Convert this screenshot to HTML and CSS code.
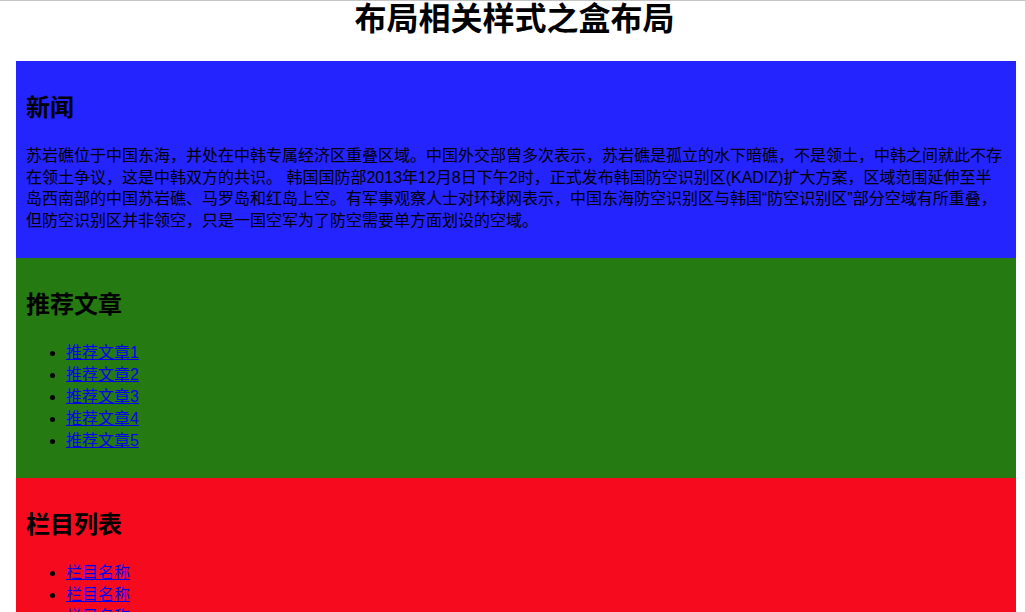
FILE: index.html
```html
<!DOCTYPE html>
<html lang="zh-CN">
<head>
<meta charset="utf-8">
<title>布局相关样式之盒布局</title>
<link rel="stylesheet" href="styles.css">
</head>
<body>
<h1 class="page-title">布局相关样式之盒布局</h1>
<div class="wrapper">
  <section class="box box-news">
    <h2 class="box-title">新闻</h2>
    <p class="box-text">苏岩礁位于中国东海，并处在中韩专属经济区重叠区域。中国外交部曾多次表示，苏岩礁是孤立的水下暗礁，不是领土，中韩之间就此不存在领土争议，这是中韩双方的共识。 韩国国防部2013年12月8日下午2时，正式发布韩国防空识别区(KADIZ)扩大方案，区域范围延伸至半岛西南部的中国苏岩礁、马罗岛和红岛上空。有军事观察人士对环球网表示，中国东海防空识别区与韩国“防空识别区”部分空域有所重叠，但防空识别区并非领空，只是一国空军为了防空需要单方面划设的空域。</p>
  </section>
  <section class="box box-recommend">
    <h2 class="box-title">推荐文章</h2>
    <ul class="box-list">
      <li><a href="#">推荐文章1</a></li>
      <li><a href="#">推荐文章2</a></li>
      <li><a href="#">推荐文章3</a></li>
      <li><a href="#">推荐文章4</a></li>
      <li><a href="#">推荐文章5</a></li>
    </ul>
  </section>
  <section class="box box-columns">
    <h2 class="box-title">栏目列表</h2>
    <ul class="box-list">
      <li><a href="#">栏目名称</a></li>
      <li><a href="#">栏目名称</a></li>
      <li><a href="#">栏目名称</a></li>
      <li><a href="#">栏目名称</a></li>
      <li><a href="#">栏目名称</a></li>
    </ul>
  </section>
</div>
</body>
</html>
```

FILE: styles.css
```css
html, body {
  margin: 0;
  padding: 0;
}
body {
  border-top: 1px solid #c4c4c4;
  font-family: "Liberation Sans", "Noto Sans CJK SC", sans-serif;
  font-size: 16px;
  color: #000;
  background: #fff;
}
.page-title {
  margin: 0 8px 24px;
  padding-left: 4px;
  font-size: 32px;
  line-height: 36px;
  font-weight: bold;
  text-align: center;
}
.wrapper {
  width: 1000px;
  margin-left: 16px;
}
.box {
  padding: 10px;
}
.box-news {
  background: #2424fe;
}
.box-recommend {
  background: #267a12;
}
.box-columns {
  background: #f50a1e;
}
.box-title {
  margin: 20px 0;
  font-size: 24px;
  line-height: 34px;
  font-weight: bold;
}
.box-text {
  margin: 16px 0;
  line-height: 21.7px;
}
.box-list {
  margin: 16px 0;
  padding-left: 40px;
}
.box-list li {
  line-height: 22px;
}
.box-list a {
  color: #0000ee;
}
```
